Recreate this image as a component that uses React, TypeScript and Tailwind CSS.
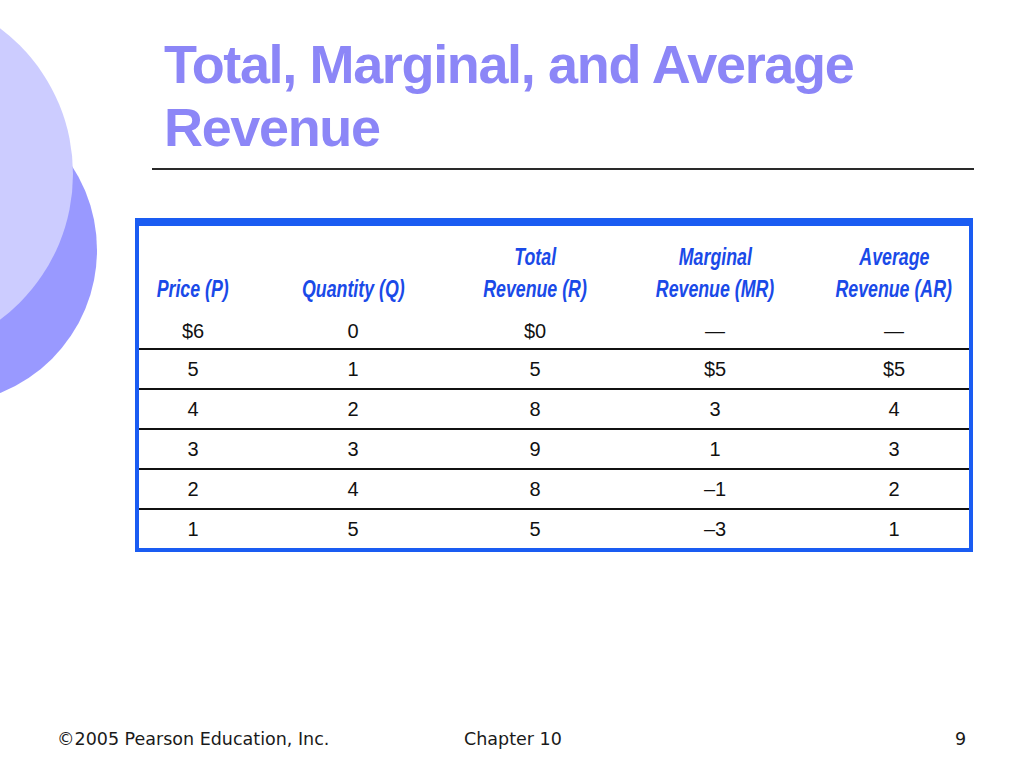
import React from "react";

const headers: { top?: string; bottom: string }[] = [
  { bottom: "Price (P)" },
  { bottom: "Quantity (Q)" },
  { top: "Total", bottom: "Revenue (R)" },
  { top: "Marginal", bottom: "Revenue (MR)" },
  { top: "Average", bottom: "Revenue (AR)" },
];

const rows: string[][] = [
  ["$6", "0", "$0", "—", "—"],
  ["5", "1", "5", "$5", "$5"],
  ["4", "2", "8", "3", "4"],
  ["3", "3", "9", "1", "3"],
  ["2", "4", "8", "–1", "2"],
  ["1", "5", "5", "–3", "1"],
];

const cols = "grid grid-cols-[108px_212px_152px_208px_150px]";

function HeaderLabel({ text }: { text?: string }) {
  return (
    <div className="h-[32px] flex items-center justify-center">
      {text && (
        <span className="inline-block scale-x-[0.74] whitespace-nowrap text-[24px] font-bold italic text-[#1a4ae8] font-['Liberation_Sans',Arial,sans-serif]">
          {text}
        </span>
      )}
    </div>
  );
}

export default function App() {
  return (
    <div className="relative w-[1024px] h-[767px] overflow-hidden bg-white font-['Liberation_Sans',Arial,sans-serif]">
      {/* Decorative circles */}
      <div className="absolute left-[-211px] top-[96px] w-[308px] h-[308px] rounded-full bg-[#9999ff]"></div>
      <div className="absolute left-[-291px] top-[-8px] w-[364px] h-[364px] rounded-full bg-[#ccccff]"></div>

      <div className="relative flex flex-col">
        {/* Title */}
        <h1 className="ml-[164px] mt-[33px] text-[54px] leading-[63px] font-bold tracking-[-0.025em] text-[#8c86f7]">
          Total, Marginal, and Average
          <br />
          Revenue
        </h1>
        <div className="ml-[152px] mt-[9px] w-[822px] h-[2px] bg-[#2a2a2a]"></div>

        {/* Table */}
        <div className="ml-[135px] mt-[48px] w-[838px] border-t-[8px] border-x-4 border-b-4 border-[#1a5cf2]">
          <div className={`${cols} pt-[15px] pb-[5px]`}>
            {headers.map((h, i) => (
              <div key={i} className="flex flex-col">
                <HeaderLabel text={h.top} />
                <HeaderLabel text={h.bottom} />
              </div>
            ))}
          </div>
          {rows.map((r, i) => (
            <div
              key={i}
              className={`${cols} ${i === 0 ? "h-[38px]" : "h-[40px] border-t-2 border-[#111]"}`}
            >
              {r.map((c, j) => (
                <div
                  key={j}
                  className={`flex items-center justify-center text-[20px] text-[#111] ${i === 0 ? "pt-[3px]" : ""}`}
                >
                  {c}
                </div>
              ))}
            </div>
          ))}
        </div>
      </div>

      {/* Footer */}
      <div className="absolute left-0 bottom-[15px] flex w-full items-center text-[17.5px] text-[#1a1a1a] font-['DejaVu_Sans',Verdana,sans-serif]">
        <span className="pl-[57px] w-[464px]">©2005 Pearson Education, Inc.</span>
        <span className="w-[491px]">Chapter 10</span>
        <span>9</span>
      </div>
    </div>
  );
}
